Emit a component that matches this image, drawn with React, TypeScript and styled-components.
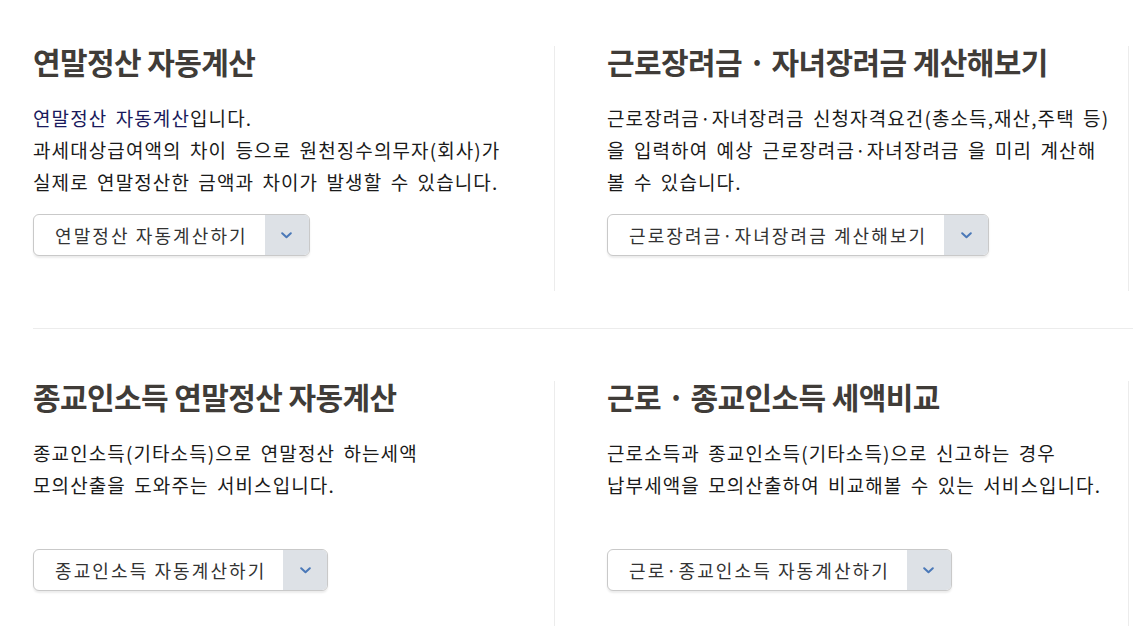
import React from "react";
import styled, { createGlobalStyle } from "styled-components";

const GlobalStyle = createGlobalStyle`
  html, body {
    margin: 0;
    padding: 0;
    background: #ffffff;
    overflow: hidden;
  }
  body {
    font-family: "Noto Sans CJK KR", "Noto Sans", sans-serif;
  }
`;

const Page = styled.div`
  width: 1133px;
  height: 627px;
  overflow: hidden;
  background: #fff;
`;

const Board = styled.div`
  margin-left: 33px;
  width: 1100px;
`;

const Row = styled.section<{ $first?: boolean }>`
  display: grid;
  grid-template-columns: 522px 574px 1fr;
  align-items: start;
  padding: ${(p) => (p.$first ? "46px 0 37px" : "52px 0 0")};
  border-bottom: ${(p) => (p.$first ? "1px solid #ececec" : "none")};
`;

const Cell = styled.div<{ $indent?: boolean }>`
  display: flex;
  flex-direction: column;
  align-items: flex-start;
  padding: 0 0 35px ${(p) => (p.$indent ? "52px" : "0")};
  border-right: 1px solid #ececec;
`;

const Title = styled.h2`
  margin: 0;
  font-size: 30px;
  line-height: 30px;
  font-weight: 700;
  color: #403c38;
  letter-spacing: -0.6px;
  white-space: nowrap;
`;

const Desc = styled.p`
  margin: 26px 0 0;
  min-height: 96px;
  font-size: 19px;
  line-height: 32px;
  letter-spacing: 1.1px;
  word-spacing: 3px;
  color: #1a1a1a;
  white-space: nowrap;
`;

const Mark = styled.span`
  color: #1a1a5c;
`;

const SelectButton = styled.button`
  margin-top: 16px;
  display: inline-flex;
  align-items: stretch;
  height: 42px;
  padding: 0;
  border: 1px solid #c9c9c9;
  border-radius: 6px;
  background: #fff;
  box-shadow: 0 2px 2px rgba(0, 0, 0, 0.08);
  overflow: hidden;
  cursor: pointer;
  font-family: inherit;
`;

const ButtonLabel = styled.span`
  display: flex;
  align-items: center;
  padding: 0 17px 0 21px;
  font-size: 18px;
  letter-spacing: 2.1px;
  color: #333;
  white-space: nowrap;
`;

const ChevronBox = styled.span`
  width: 44px;
  display: flex;
  align-items: center;
  justify-content: center;
  background: #dde1e6;
  color: #4a78b8;
`;

function Chevron() {
  return (
    <svg width="11" height="7" viewBox="0 0 11 7" fill="none">
      <path d="M1.2 1.2 L5.5 5.3 L9.8 1.2" stroke="currentColor" strokeWidth="2" strokeLinecap="round" strokeLinejoin="round" />
    </svg>
  );
}

function Select({ label }: { label: string }) {
  return (
    <SelectButton type="button">
      <ButtonLabel>{label}</ButtonLabel>
      <ChevronBox>
        <Chevron />
      </ChevronBox>
    </SelectButton>
  );
}

export default function App() {
  return (
    <Page>
      <GlobalStyle />
      <Board>
        <Row $first>
          <Cell>
            <Title>연말정산 자동계산</Title>
            <Desc>
              <Mark>연말정산 자동계산</Mark>입니다.
              <br />
              과세대상급여액의 차이 등으로 원천징수의무자(회사)가
              <br />
              실제로 연말정산한 금액과 차이가 발생할 수 있습니다.
            </Desc>
            <Select label="연말정산 자동계산하기" />
          </Cell>
          <Cell $indent>
            <Title>근로장려금 · 자녀장려금 계산해보기</Title>
            <Desc>
              근로장려금·자녀장려금 신청자격요건(총소득,재산,주택 등)
              <br />
              을 입력하여 예상 근로장려금·자녀장려금 을 미리 계산해
              <br />
              볼 수 있습니다.
            </Desc>
            <Select label="근로장려금·자녀장려금 계산해보기" />
          </Cell>
        </Row>
        <Row>
          <Cell>
            <Title>종교인소득 연말정산 자동계산</Title>
            <Desc>
              종교인소득(기타소득)으로 연말정산 하는세액
              <br />
              모의산출을 도와주는 서비스입니다.
            </Desc>
            <Select label="종교인소득 자동계산하기" />
          </Cell>
          <Cell $indent>
            <Title>근로 · 종교인소득 세액비교</Title>
            <Desc>
              근로소득과 종교인소득(기타소득)으로 신고하는 경우
              <br />
              납부세액을 모의산출하여 비교해볼 수 있는 서비스입니다.
            </Desc>
            <Select label="근로·종교인소득 자동계산하기" />
          </Cell>
        </Row>
      </Board>
    </Page>
  );
}
